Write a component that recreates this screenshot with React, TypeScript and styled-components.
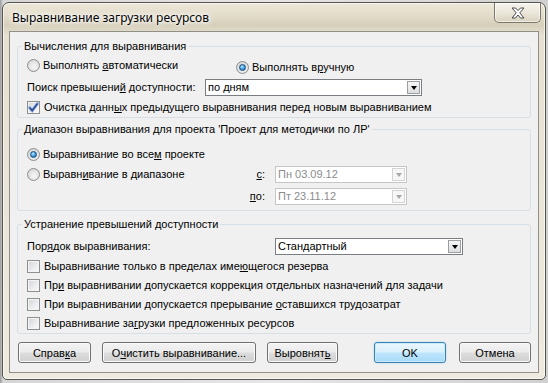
import React from 'react';
import styled, { createGlobalStyle, css } from 'styled-components';

const GlobalStyle = createGlobalStyle`
  html, body {
    margin: 0;
    padding: 0;
  }
  body {
    width: 548px;
    height: 383px;
    overflow: hidden;
    background: linear-gradient(90deg, #9a9a9a 0px, #d6d6d6 3px, #e6e6e6 50%, #d0d0d0 100%);
    font-family: "Liberation Sans", Arial, sans-serif;
    font-size: 11px;
    color: #000;
  }
`;

const Window = styled.div`
  box-sizing: border-box;
  margin: 2px 0 0 2px;
  width: 544px;
  height: 378px;
  border: 1px solid #56544d;
  border-radius: 7px 7px 5px 5px;
  background: linear-gradient(180deg, #ece7da 0px, #e4ddcb 12px, #d6cfba 22px, #e6e0d2 32px, #eeeae0 100%);
  box-shadow: inset 0 0 0 1px rgba(255, 255, 255, 0.65);
  display: flex;
  flex-direction: column;
`;

const TitleBar = styled.div`
  height: 28px;
  flex-shrink: 0;
  display: flex;
  align-items: flex-start;
  justify-content: space-between;
  padding: 0 4px 0 9px;
`;

const Title = styled.div`
  font-family: "Noto Sans", "Liberation Sans", sans-serif;
  font-size: 12px;
  line-height: 16px;
  margin-top: 7px;
  color: #000;
  text-shadow: 0 0 8px #fff, 0 0 5px #fff, 0 0 3px #fff;
`;

const CloseButton = styled.div`
  box-sizing: border-box;
  width: 47px;
  height: 20px;
  border: 1px solid #7c7869;
  border-top: none;
  border-radius: 0 0 5px 5px;
  background: linear-gradient(180deg, rgba(255, 255, 255, 0.55), rgba(236, 232, 220, 0.7) 55%, rgba(215, 209, 192, 0.7));
  box-shadow: inset 0 0 0 1px rgba(255, 255, 255, 0.6);
  display: flex;
  align-items: center;
  justify-content: center;
`;

const Client = styled.div`
  flex: 1;
  margin: 0 6px 6px 6px;
  border: 1px solid #918e86;
  background: #f0f0f0;
  padding: 8px 7px 7px 7px;
  display: flex;
  flex-direction: column;
`;

const Group = styled.fieldset<{ $mt?: number; $pt: number; $pb: number }>`
  margin: ${(p) => p.$mt ?? 0}px 0 0 0;
  min-width: 0;
  border: 1px solid #d5dfe5;
  border-radius: 3px;
  padding: ${(p) => p.$pt}px 9px ${(p) => p.$pb}px 9px;
  display: flex;
  flex-direction: column;
`;

const Legend = styled.legend`
  padding: 0 2px;
  margin-left: -5px;
  line-height: 13px;
`;

const Stack = styled.div<{ $gap: number }>`
  display: flex;
  flex-direction: column;
  gap: ${(p) => p.$gap}px;
`;

const Row = styled.div<{ $h: number }>`
  display: flex;
  align-items: center;
  height: ${(p) => p.$h}px;
  line-height: 13px;
  white-space: nowrap;
`;

const Cell = styled.div<{ $w: number }>`
  width: ${(p) => p.$w}px;
  flex-shrink: 0;
  white-space: nowrap;
`;

const RangeGrid = styled.div`
  display: grid;
  width: 380px;
  grid-template-columns: 1fr auto 132px;
  grid-auto-rows: 17px;
  column-gap: 10px;
  row-gap: 5px;
  align-items: center;
  line-height: 13px;
  margin-top: 3px;
`;

const SideLabel = styled.span`
  justify-self: end;
`;

const Option = styled.label`
  display: inline-flex;
  align-items: center;
  white-space: nowrap;
`;

const RadioMark = styled.span<{ $on?: boolean }>`
  box-sizing: border-box;
  width: 13px;
  height: 13px;
  border-radius: 50%;
  border: 1px solid #8c8e91;
  background: radial-gradient(circle at 55% 60%, #f7f7f7 0%, #e6e6e6 45%, #c9cacc 100%);
  margin-right: 3px;
  flex-shrink: 0;
  display: inline-flex;
  align-items: center;
  justify-content: center;
  ${(p) =>
    p.$on &&
    css`
      &::after {
        content: '';
        box-sizing: border-box;
        width: 7px;
        height: 7px;
        border-radius: 50%;
        border: 1px solid #1b4f7e;
        background: radial-gradient(circle at 40% 35%, #c4ecff 0%, #47a4e6 45%, #14609f 100%);
      }
    `}
`;

const CheckMark = styled.span`
  box-sizing: border-box;
  width: 13px;
  height: 13px;
  border: 1px solid #8e8f8f;
  background: linear-gradient(135deg, #d0d3d8 0%, #eceef0 60%, #fafafa 100%);
  box-shadow: inset 0 0 0 1px #f4f4f4;
  margin-right: 4px;
  flex-shrink: 0;
  display: inline-flex;
  align-items: center;
  justify-content: center;
`;

const Key = styled.u`
  text-decoration: underline;
  text-underline-offset: 1px;
`;

const Combo = styled.div<{ $w: number; $off?: boolean }>`
  box-sizing: border-box;
  width: ${(p) => p.$w}px;
  height: 17px;
  border: 1px solid ${(p) => (p.$off ? '#c6c6c6' : '#7a7d82')};
  background: #fff;
  color: ${(p) => (p.$off ? '#8c8c8c' : '#000')};
  padding: 1px 1px 1px 2px;
  display: flex;
  align-items: center;
  justify-content: space-between;
  line-height: 13px;
  white-space: nowrap;
`;

const ComboArrow = styled.span<{ $off?: boolean }>`
  box-sizing: border-box;
  width: 13px;
  height: 13px;
  border: 1px solid ${(p) => (p.$off ? '#d4d4d4' : '#9a9ea5')};
  background: ${(p) => (p.$off ? '#f7f7f7' : 'linear-gradient(180deg, #f6f6f6, #dedede)')};
  display: flex;
  align-items: center;
  justify-content: center;
  &::after {
    content: '';
    width: 0;
    height: 0;
    border-left: 3.5px solid transparent;
    border-right: 3.5px solid transparent;
    border-top: 4px solid ${(p) => (p.$off ? '#a6a6a6' : '#000')};
    margin-top: 1px;
  }
`;

const ButtonBar = styled.div`
  display: flex;
  justify-content: space-between;
  margin-top: 8px;
  padding-left: 1px;
`;

const ButtonGroup = styled.div<{ $gap: number }>`
  display: flex;
  gap: ${(p) => p.$gap}px;
`;

const Button = styled.button<{ $w: number; $primary?: boolean }>`
  box-sizing: border-box;
  width: ${(p) => p.$w}px;
  height: 21px;
  padding: 0;
  font-family: "Liberation Sans", Arial, sans-serif;
  font-size: 11px;
  color: #000;
  border: 1px solid #707070;
  border-radius: 3px;
  background: linear-gradient(180deg, #f3f3f3 0%, #ebebeb 48%, #dddddd 52%, #cfcfcf 100%);
  box-shadow: inset 0 0 0 1px #fbfbfb;
  ${(p) =>
    p.$primary &&
    css`
      border-color: #3c7fb1;
      background: linear-gradient(180deg, #eaf6fd 0%, #d9f0fc 48%, #bee6fd 52%, #a7d9f5 100%);
      box-shadow: inset 0 0 0 1px #c6ecfd, 0 0 2px rgba(80, 170, 230, 0.45);
    `}
`;

function Radio({ on, children }: { on?: boolean; children: React.ReactNode }) {
  return (
    <Option>
      <RadioMark $on={on} />
      <span>{children}</span>
    </Option>
  );
}

function Check({ on, children }: { on?: boolean; children: React.ReactNode }) {
  return (
    <Option>
      <CheckMark>
        {on && (
          <svg width="11" height="11" viewBox="0 0 11 11">
            <path d="M1.5 5.5 L4.2 8.6 L9.6 1.4" fill="none" stroke="#9fb6e0" strokeWidth="3" strokeLinecap="round" />
            <path d="M1.5 5.5 L4.2 8.6 L9.6 1.4" fill="none" stroke="#2c4f9a" strokeWidth="1.7" />
          </svg>
        )}
      </CheckMark>
      <span>{children}</span>
    </Option>
  );
}

function Select({ w, off, value }: { w: number; off?: boolean; value: string }) {
  return (
    <Combo $w={w} $off={off}>
      <span>{value}</span>
      <ComboArrow $off={off} />
    </Combo>
  );
}

export default function App() {
  return (
    <>
      <GlobalStyle />
      <Window>
        <TitleBar>
          <Title>Выравнивание загрузки ресурсов</Title>
          <CloseButton>
            <svg width="14" height="12" viewBox="0 0 14 12">
              <polygon
                points="1,1 4.5,1 7,3.6 9.5,1 13,1 8.8,5.8 13,11 9.5,11 7,8 4.5,11 1,11 5.2,5.8"
                fill="#fdfdfd"
                stroke="#4a4a4a"
                strokeWidth="1"
                strokeLinejoin="round"
              />
            </svg>
          </CloseButton>
        </TitleBar>
        <Client>
          <Group $pt={5} $pb={1}>
            <Legend>Вычисления для выравнивания</Legend>
            <Stack $gap={2}>
              <Row $h={18}>
                <Cell $w={209}>
                  <Radio>
                    Выполнять <Key>а</Key>втоматически
                  </Radio>
                </Cell>
                <Radio on>
                  Выполнять в<Key>р</Key>учную
                </Radio>
              </Row>
              <Row $h={18}>
                <Cell $w={178}>
                  <span>
                    Поиск превышени<Key>й</Key> доступности:
                  </span>
                </Cell>
                <Select w={217} value="по дням" />
              </Row>
              <Row $h={18}>
                <Check on>
                  Очистка данн<Key>ы</Key>х предыдущего выравнивания перед новым выравниванием
                </Check>
              </Row>
            </Stack>
          </Group>

          <Group $mt={5} $pt={9} $pb={5}>
            <Legend>Диапазон выравнивания для проекта 'Проект для методички по ЛР'</Legend>
            <Row $h={18}>
              <Radio on>
                Выравнивание во все<Key>м</Key> проекте
              </Radio>
            </Row>
            <RangeGrid>
              <Radio>
                Выравн<Key>и</Key>вание в диапазоне
              </Radio>
              <SideLabel>
                <Key>с</Key>:
              </SideLabel>
              <Select w={132} off value="Пн 03.09.12" />
              <span />
              <SideLabel>
                <Key>п</Key>о:
              </SideLabel>
              <Select w={132} off value="Пт 23.11.12" />
            </RangeGrid>
          </Group>

          <Group $mt={7} $pt={7} $pb={2}>
            <Legend>Устранение превышений доступности</Legend>
            <Stack $gap={4}>
              <Row $h={17}>
                <Cell $w={248}>
                  <span>
                    Пор<Key>я</Key>док выравнивания:
                  </span>
                </Cell>
                <Select w={188} value="Стандартный" />
              </Row>
              <Row $h={15}>
                <Check>
                  Выравнивание только в пределах име<Key>ю</Key>щегося резерва
                </Check>
              </Row>
              <Row $h={15}>
                <Check>
                  Пр<Key>и</Key> выравнивании допускается коррекция отдельных назначений для задачи
                </Check>
              </Row>
              <Row $h={15}>
                <Check>
                  При выравнивании допускается прерывание <Key>о</Key>ставшихся трудозатрат
                </Check>
              </Row>
              <Row $h={15}>
                <Check>
                  Выравнивание за<Key>г</Key>рузки предложенных ресурсов
                </Check>
              </Row>
            </Stack>
          </Group>

          <ButtonBar>
            <ButtonGroup $gap={11}>
              <Button $w={73}>
                Справ<Key>к</Key>а
              </Button>
              <Button $w={154}>
                О<Key>ч</Key>истить выравнивание...
              </Button>
              <Button $w={71}>
                Выровнят<Key>ь</Key>
              </Button>
            </ButtonGroup>
            <ButtonGroup $gap={13}>
              <Button $w={72} $primary>
                OK
              </Button>
              <Button $w={72}>Отмена</Button>
            </ButtonGroup>
          </ButtonBar>
        </Client>
      </Window>
    </>
  );
}
